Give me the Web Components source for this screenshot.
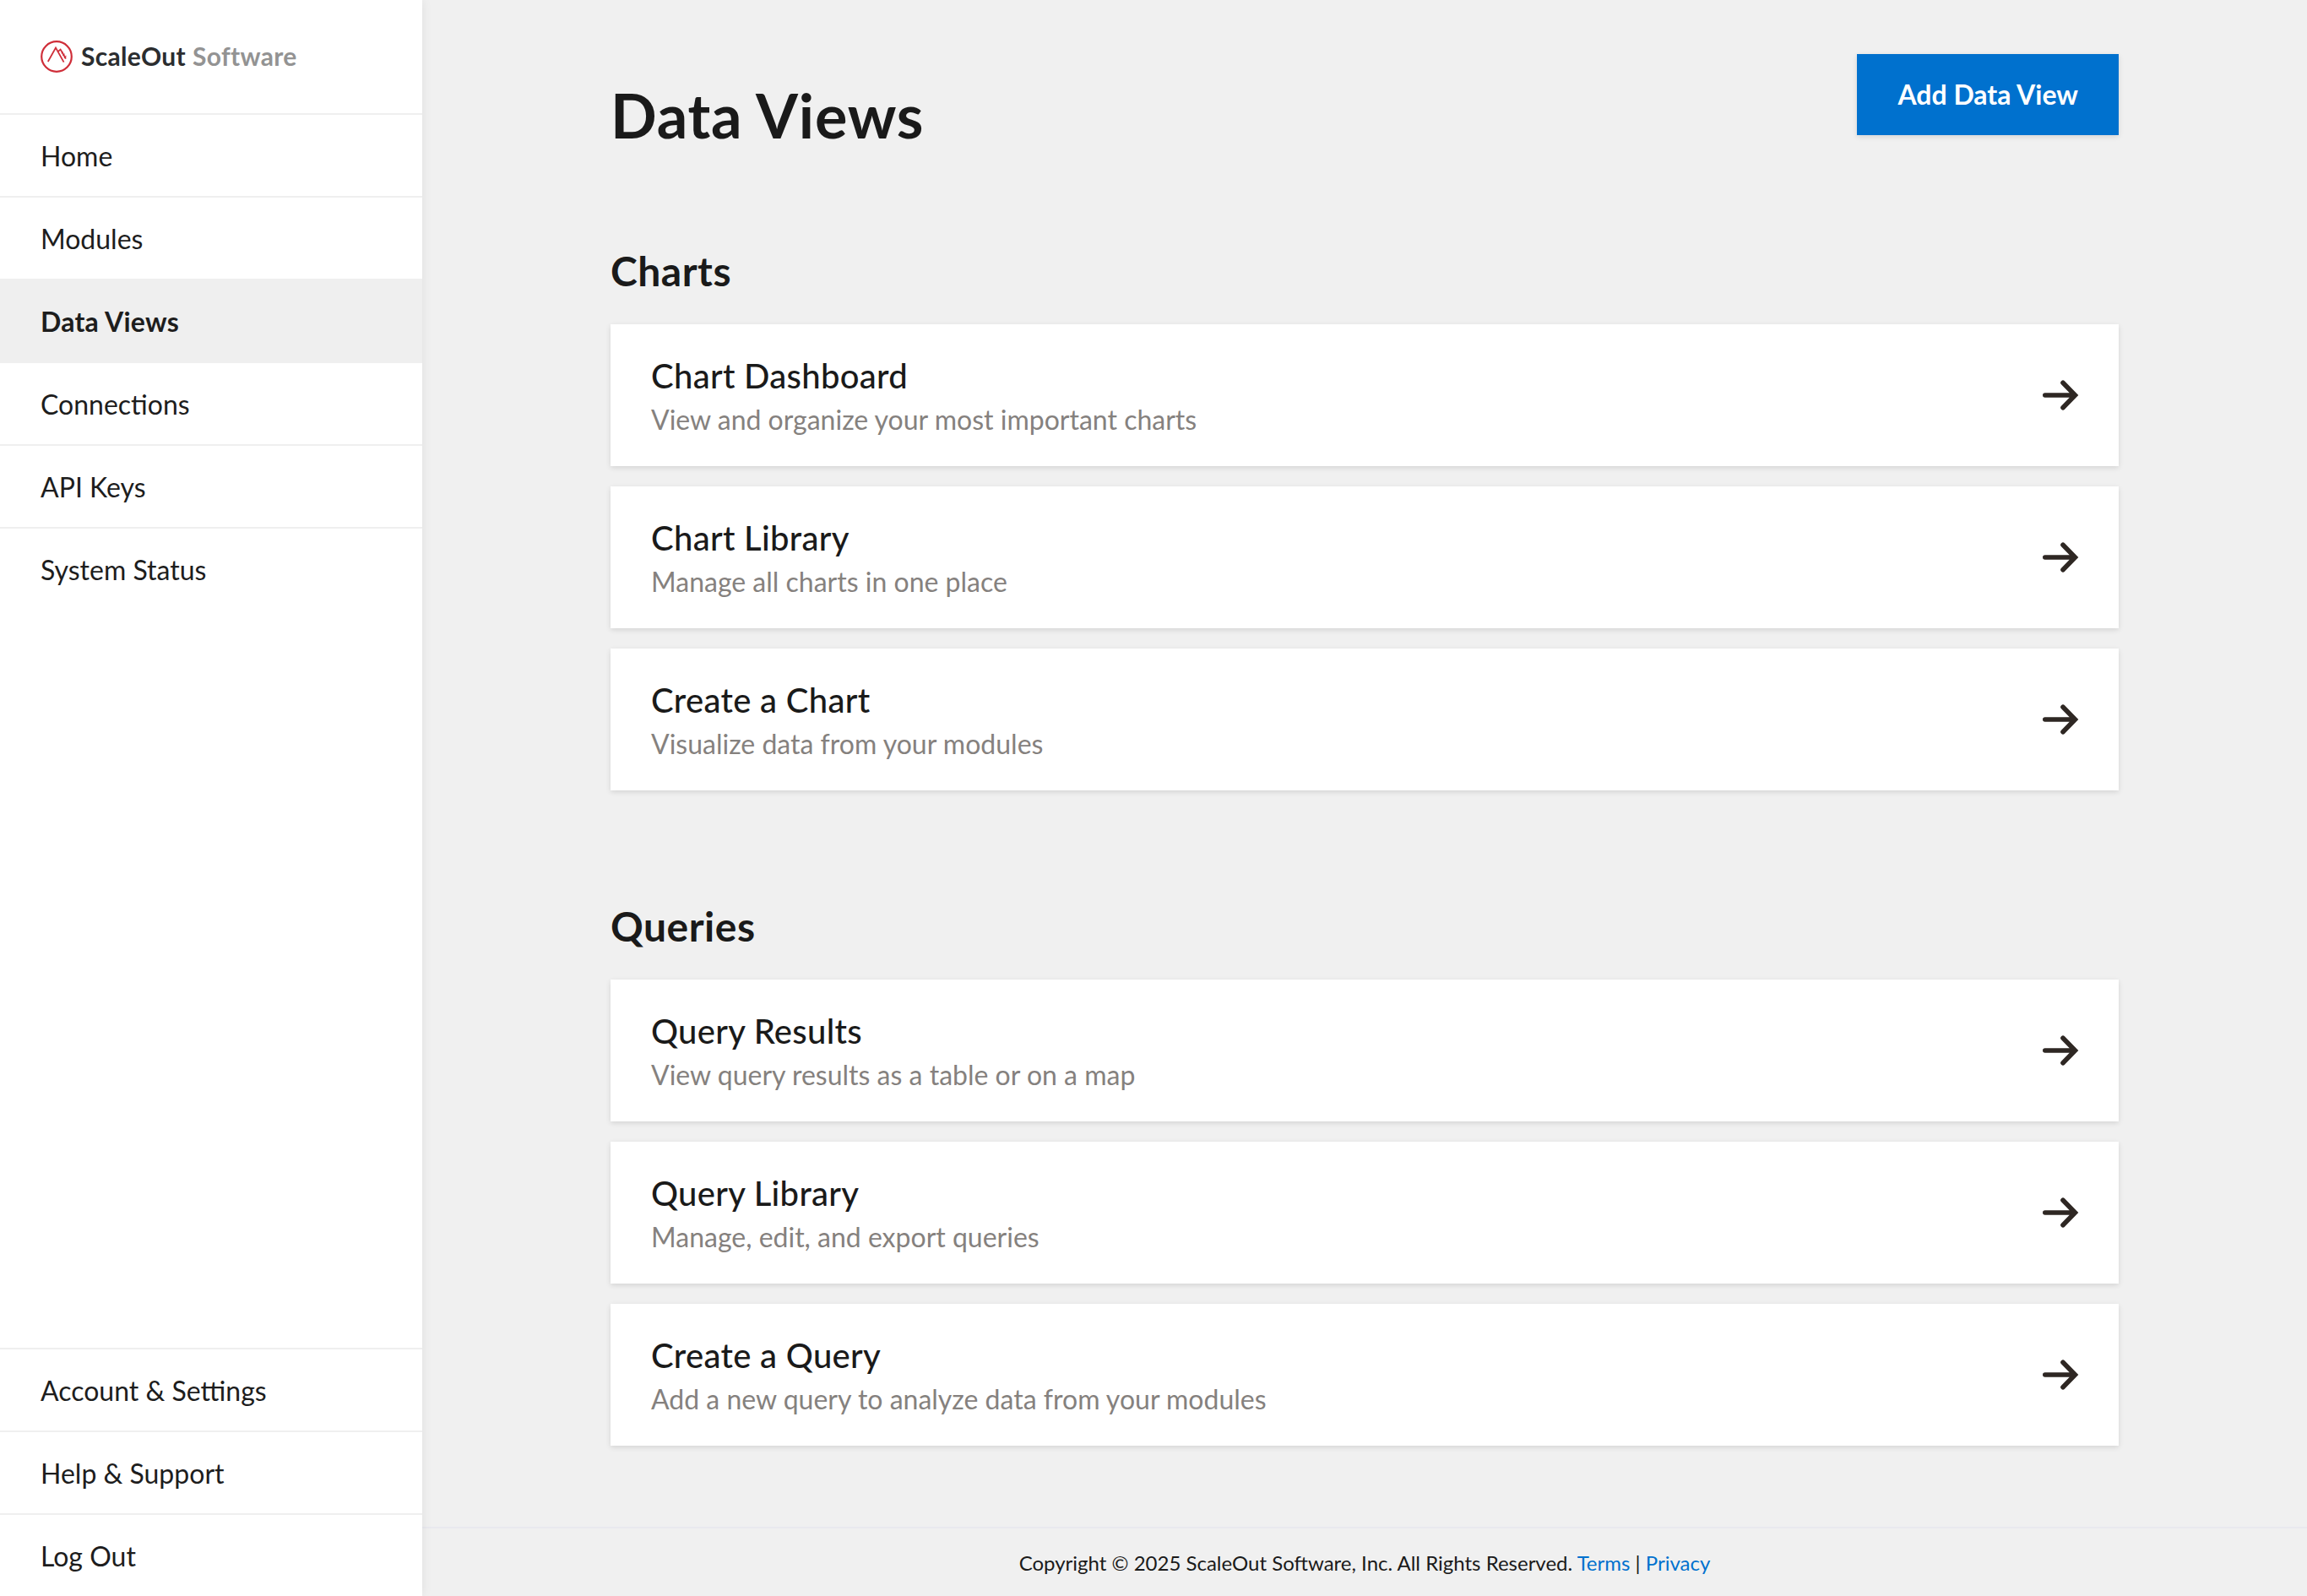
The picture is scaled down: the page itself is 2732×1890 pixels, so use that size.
<!DOCTYPE html>
<html lang="en">
<head>
<meta charset="utf-8">
<title>Data Views</title>
<style>
  html, body { margin: 0; height: 100%; background: #f0f0f0; }
  body { font-family: Lato, "Open Sans", sans-serif; color: #1a1a1a; }
</style>
</head>
<body>
<app-shell>
  <side-nav slot="nav">
    <nav-item href="#">Home</nav-item>
    <nav-item href="#">Modules</nav-item>
    <nav-item href="#" active>Data Views</nav-item>
    <nav-item href="#">Connections</nav-item>
    <nav-item href="#">API Keys</nav-item>
    <nav-item href="#" last>System Status</nav-item>
    <nav-item href="#" slot="bottom">Account &amp; Settings</nav-item>
    <nav-item href="#" slot="bottom">Help &amp; Support</nav-item>
    <nav-item href="#" slot="bottom" last>Log Out</nav-item>
  </side-nav>
  <page-header>Data Views<span slot="action">Add Data View</span></page-header>
  <view-section heading="Charts">
    <view-card heading="Chart Dashboard">View and organize your most important charts</view-card>
    <view-card heading="Chart Library">Manage all charts in one place</view-card>
    <view-card heading="Create a Chart">Visualize data from your modules</view-card>
  </view-section>
  <view-section heading="Queries">
    <view-card heading="Query Results">View query results as a table or on a map</view-card>
    <view-card heading="Query Library">Manage, edit, and export queries</view-card>
    <view-card heading="Create a Query">Add a new query to analyze data from your modules</view-card>
  </view-section>
  <site-footer slot="footer"></site-footer>
</app-shell>
<script>
class AppShell extends HTMLElement {
  constructor() {
    super();
    this.attachShadow({mode:'open'});
    this.shadowRoot.innerHTML = `
<style>
:host { display:grid; grid-template-columns:500px 1fr; grid-template-rows:1890px; width:2732px; overflow:hidden; }
main { display:flex; flex-direction:column; min-width:0; min-height:0; }
.content { flex:1; width:1786px; margin:0 auto; }
</style>
<slot name="nav"></slot>
<main>
  <div class="content"><slot></slot></div>
  <slot name="footer"></slot>
</main>`;
  }
}
customElements.define('app-shell', AppShell);

class SideNav extends HTMLElement {
  constructor() {
    super();
    this.attachShadow({mode:'open'});
    this.shadowRoot.innerHTML = `
<style>
:host { display:flex; flex-direction:column; background:#fff; box-shadow:0 0 12px rgba(0,0,0,.07); position:relative; z-index:1; }
.logo { display:flex; align-items:center; height:134px; padding-left:48px; border-bottom:2px solid #efefef; font-size:30px; font-weight:700; letter-spacing:.3px; color:#2b2d2f; }
.logo svg { width:38px; height:38px; margin-right:10px; flex:none; }
.logo b { font-weight:inherit; position:relative; top:-1px; }
.logo b + b { margin-left:8px; color:#939393; }
nav { flex:1; }
.bottom { border-top:2px solid #efefef; }
</style>
<div class="logo">
  <svg viewBox="0 0 38 38" fill="none" stroke="#cf2e39">
    <circle cx="19" cy="19" r="17.8" stroke-width="2.2"/>
    <path d="M8.8 25 18 8.6 27.6 25.6M21.2 12.6 23.6 10.6 30 21.5" stroke-width="1.8"/>
    <path d="M26.5 13.4 24.8 15.4M28.4 15.6 26.4 18M30.4 18 28 21" stroke-width="1.1"/>
  </svg><b>ScaleOut</b><b>Software</b>
</div>
<nav><slot></slot></nav>
<div class="bottom"><slot name="bottom"></slot></div>`;
  }
}
customElements.define('side-nav', SideNav);

class NavItem extends HTMLElement {
  constructor() {
    super();
    this.attachShadow({mode:'open'});
    this.shadowRoot.innerHTML = `
<style>
:host { display:block; font-size:32px; color:#1d1d1d; }
a { display:flex; align-items:center; height:96px; padding-left:48px; color:inherit; text-decoration:none; border-bottom:2px solid #efefef; }
:host([active]) a { background:#efefef; font-weight:700; letter-spacing:.25px; }
:host([last]) a { border-bottom:0; }
</style>
<a part="link"><slot></slot></a>`;
    this.shadowRoot.querySelector('a').href = this.getAttribute('href') || '#';
  }
}
customElements.define('nav-item', NavItem);

class PageHeader extends HTMLElement {
  constructor() {
    super();
    this.attachShadow({mode:'open'});
    this.shadowRoot.innerHTML = `
<style>
:host { display:flex; justify-content:space-between; align-items:flex-start; padding-top:64px; height:225px; }
h1 { margin:28px 0 0; font-size:72px; line-height:88px; font-weight:700; letter-spacing:.8px; color:#1a1a1a; }
a { display:block; padding:0 48px; line-height:96px; background:#0071ce; color:#fff; font-size:32px; font-weight:700; text-decoration:none; box-shadow:0 2px 6px rgba(0,0,0,.12); }
</style>
<h1><slot></slot></h1>
<a href="#"><slot name="action"></slot></a>`;
  }
}
customElements.define('page-header', PageHeader);

class ViewSection extends HTMLElement {
  constructor() {
    super();
    this.attachShadow({mode:'open'});
    this.shadowRoot.innerHTML = `
<style>
:host { display:block; margin-bottom:129px; }
:host(:last-of-type) { margin-bottom:0; }
h2 { margin:0 0 31px; font-size:48px; line-height:64px; font-weight:700; letter-spacing:.5px; color:#1a1a1a; }
.list { display:flex; flex-direction:column; gap:24px; }
</style>
<h2></h2>
<div class="list"><slot></slot></div>`;
    this.shadowRoot.querySelector('h2').textContent = this.getAttribute('heading');
  }
}
customElements.define('view-section', ViewSection);

class ViewCard extends HTMLElement {
  constructor() {
    super();
    this.attachShadow({mode:'open'});
    this.shadowRoot.innerHTML = `
<style>
:host { display:flex; align-items:center; justify-content:space-between; height:168px; padding:0 48px; background:#fff; box-shadow:0 2px 6px rgba(0,0,0,.12); }
.text { padding-top:3px; }
h3 { margin:0 0 6px; font-size:40px; line-height:48px; font-weight:500; letter-spacing:.3px; color:#1a1a1a; }
p { margin:0; font-size:32px; line-height:44px; color:#85817e; }
svg { width:42px; height:36px; flex:none; overflow:visible; }
</style>
<div class="text">
  <h3></h3>
  <p><slot></slot></p>
</div>
<svg viewBox="0 0 42 36" fill="none" stroke="#2e2723" stroke-width="5.6" stroke-linecap="round"><path d="M2.8 18H38M24 3.2 38.4 18 24 32.8"/></svg>`;
    this.shadowRoot.querySelector('h3').textContent = this.getAttribute('heading');
  }
}
customElements.define('view-card', ViewCard);

class SiteFooter extends HTMLElement {
  constructor() {
    super();
    this.attachShadow({mode:'open'});
    this.shadowRoot.innerHTML = `
<style>
:host { display:flex; align-items:center; justify-content:center; height:80px; border-top:2px solid #e9e9ee; font-size:24px; color:#1a1a1a; }
a { color:#0071ce; text-decoration:none; }
</style>
<div>Copyright © 2025 ScaleOut Software, Inc. All Rights Reserved. <a href="#">Terms</a> | <a href="#">Privacy</a></div>`;
  }
}
customElements.define('site-footer', SiteFooter);
</script>
</body>
</html>
